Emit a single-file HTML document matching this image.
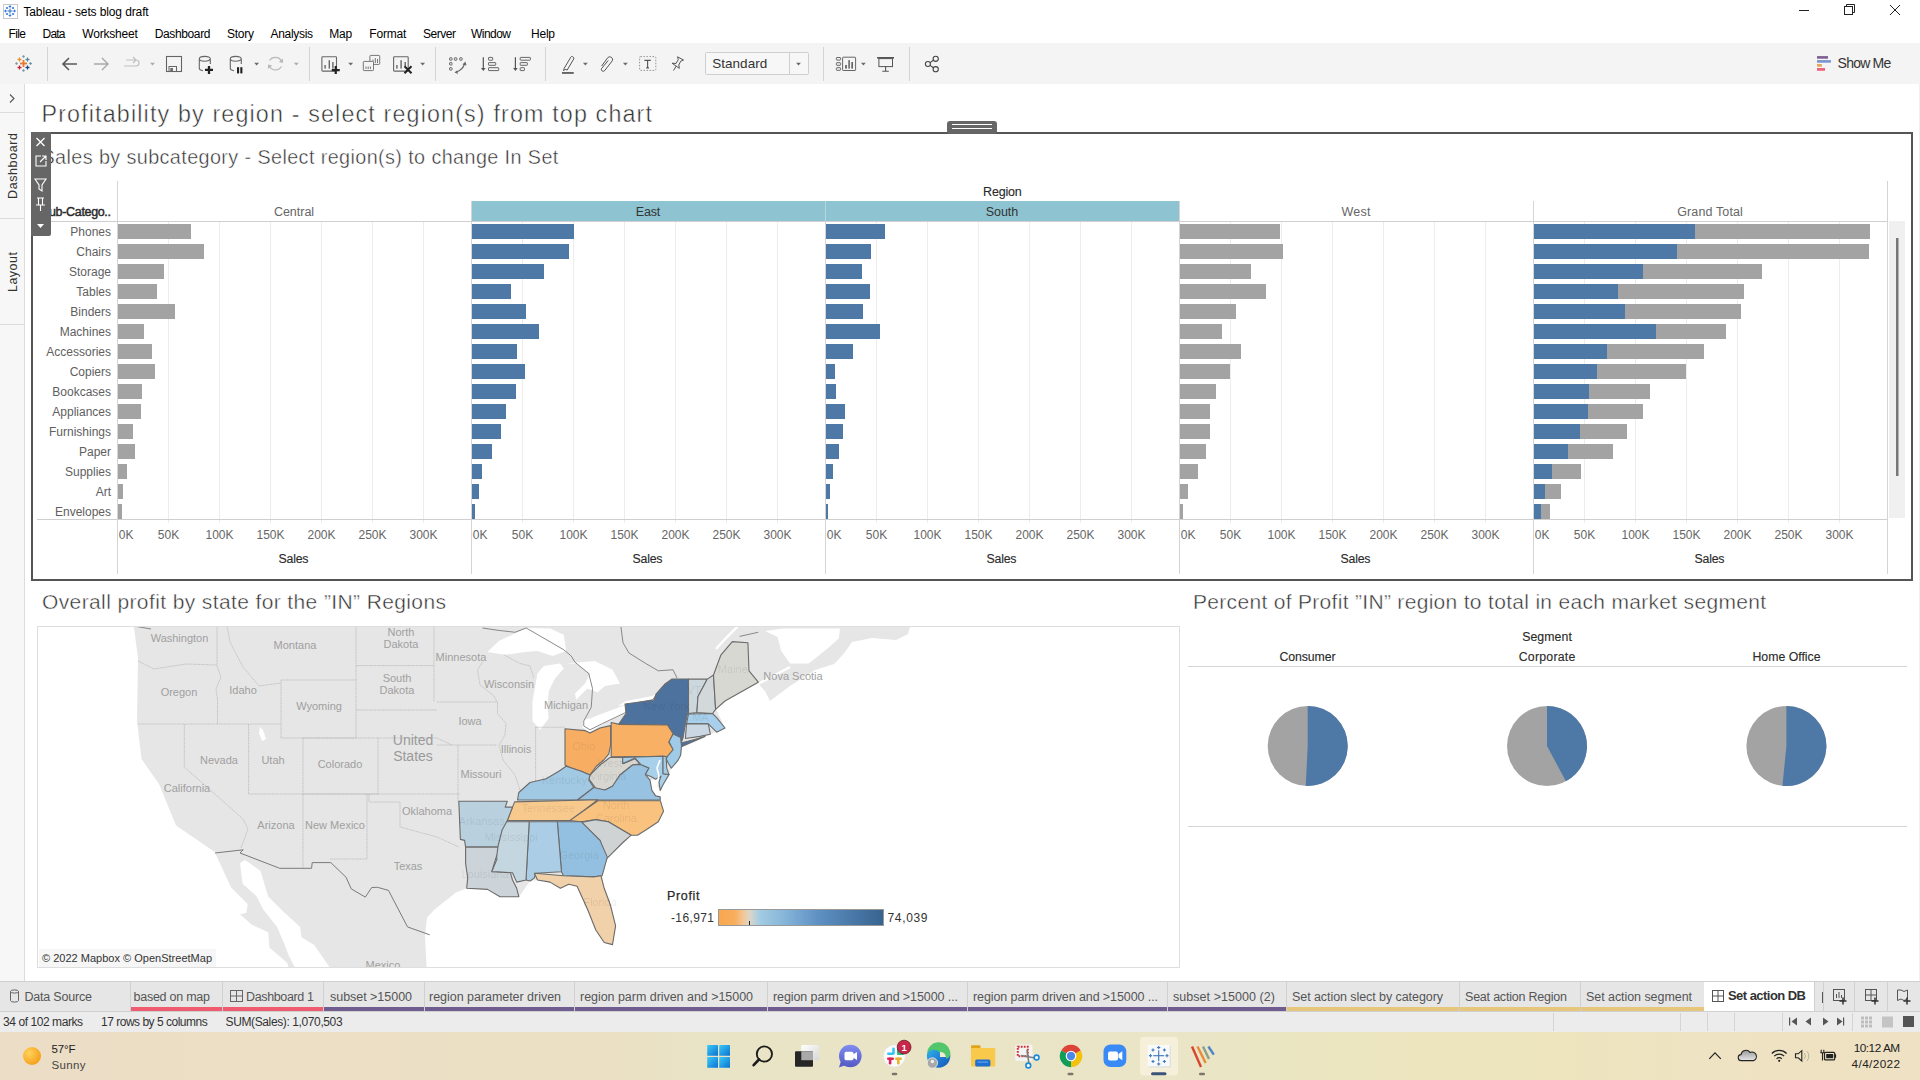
<!DOCTYPE html>
<html><head><meta charset="utf-8"><title>Tableau - sets blog draft</title>
<style>
html,body{margin:0;padding:0;width:1920px;height:1080px;overflow:hidden;background:#fff;}
svg{display:block;font-family:"Liberation Sans", sans-serif;}
</style></head><body>
<svg width="1920" height="1080" viewBox="0 0 1920 1080">
<rect x="0" y="0" width="1920" height="1080" fill="#ffffff" />
<rect x="0" y="43" width="1920" height="41" fill="#f4f4f4" />
<rect x="1919" y="84" width="1" height="897" fill="#f0f0f0" />
<rect x="0" y="84" width="24" height="897" fill="#f7f7f7" />
<line x1="24.5" y1="84" x2="24.5" y2="981" stroke="#dcdcdc" stroke-width="1" />
<line x1="0" y1="112.5" x2="24" y2="112.5" stroke="#dcdcdc" stroke-width="1" />
<line x1="0" y1="218.5" x2="24" y2="218.5" stroke="#dcdcdc" stroke-width="1" />
<line x1="0" y1="324.5" x2="24" y2="324.5" stroke="#dcdcdc" stroke-width="1" />
<rect x="0" y="981" width="1920" height="31" fill="#e6e6e6" />
<line x1="0" y1="981.5" x2="1920" y2="981.5" stroke="#d0d0d0" stroke-width="1" />
<line x1="0" y1="1011.5" x2="1920" y2="1011.5" stroke="#d0d0d0" stroke-width="1" />
<rect x="0" y="1012" width="1920" height="20" fill="#ececec" />
<defs><linearGradient id="tb" x1="0" y1="0" x2="1" y2="0"><stop offset="0" stop-color="#ecdec6"/><stop offset="0.3" stop-color="#ebdfc4"/><stop offset="0.38" stop-color="#e9e4c6"/><stop offset="0.62" stop-color="#e9e5c6"/><stop offset="0.7" stop-color="#ece6c0"/><stop offset="0.8" stop-color="#ede5bd"/><stop offset="0.88" stop-color="#eee3c2"/><stop offset="1" stop-color="#efe1c3"/></linearGradient></defs>
<rect x="0" y="1032" width="1920" height="48" fill="url(#tb)" />
<rect x="3.5" y="4.5" width="14" height="14" fill="#ffffff" stroke="#c8c8c8" stroke-width="1"/>
<line x1="7.5" y1="11" x2="12.5" y2="11" stroke="#3a7bd5" stroke-width="1.1" />
<line x1="10" y1="8.5" x2="10" y2="13.5" stroke="#3a7bd5" stroke-width="1.1" />
<line x1="8.7" y1="6.5" x2="11.3" y2="6.5" stroke="#3a7bd5" stroke-width="1.1" />
<line x1="10" y1="5.2" x2="10" y2="7.8" stroke="#3a7bd5" stroke-width="1.1" />
<line x1="8.7" y1="15.5" x2="11.3" y2="15.5" stroke="#3a7bd5" stroke-width="1.1" />
<line x1="10" y1="14.2" x2="10" y2="16.8" stroke="#3a7bd5" stroke-width="1.1" />
<line x1="4.2" y1="11" x2="6.8" y2="11" stroke="#3a7bd5" stroke-width="1.1" />
<line x1="5.5" y1="9.7" x2="5.5" y2="12.3" stroke="#3a7bd5" stroke-width="1.1" />
<line x1="13.2" y1="11" x2="15.8" y2="11" stroke="#3a7bd5" stroke-width="1.1" />
<line x1="14.5" y1="9.7" x2="14.5" y2="12.3" stroke="#3a7bd5" stroke-width="1.1" />
<line x1="5.9" y1="8" x2="8.1" y2="8" stroke="#3a7bd5" stroke-width="1.1" />
<line x1="7" y1="6.9" x2="7" y2="9.1" stroke="#3a7bd5" stroke-width="1.1" />
<line x1="11.9" y1="8" x2="14.1" y2="8" stroke="#3a7bd5" stroke-width="1.1" />
<line x1="13" y1="6.9" x2="13" y2="9.1" stroke="#3a7bd5" stroke-width="1.1" />
<line x1="5.9" y1="14" x2="8.1" y2="14" stroke="#3a7bd5" stroke-width="1.1" />
<line x1="7" y1="12.9" x2="7" y2="15.1" stroke="#3a7bd5" stroke-width="1.1" />
<line x1="11.9" y1="14" x2="14.1" y2="14" stroke="#3a7bd5" stroke-width="1.1" />
<line x1="13" y1="12.9" x2="13" y2="15.1" stroke="#3a7bd5" stroke-width="1.1" />
<text x="23.4" y="15.6" font-size="12" fill="#000" textLength="125.3" lengthAdjust="spacing">Tableau - sets blog draft</text>
<line x1="1799" y1="10.5" x2="1809" y2="10.5" stroke="#222" stroke-width="1" />
<rect x="1844.5" y="6.5" width="8" height="8" fill="none" stroke="#222" stroke-width="1"/>
<path d="M1846.5,6.5 V4.5 H1854.5 V12.5 H1852.5" fill="none" stroke="#222" stroke-width="1" />
<line x1="1890" y1="5" x2="1900" y2="15" stroke="#222" stroke-width="1" />
<line x1="1900" y1="5" x2="1890" y2="15" stroke="#222" stroke-width="1" />
<text x="8.5" y="37.5" font-size="12" fill="#000" textLength="17.5" lengthAdjust="spacing">File</text>
<text x="42.5" y="37.5" font-size="12" fill="#000" textLength="23" lengthAdjust="spacing">Data</text>
<text x="82.3" y="37.5" font-size="12" fill="#000" textLength="55.5" lengthAdjust="spacing">Worksheet</text>
<text x="154.7" y="37.5" font-size="12" fill="#000" textLength="55.8" lengthAdjust="spacing">Dashboard</text>
<text x="226.9" y="37.5" font-size="12" fill="#000" textLength="27" lengthAdjust="spacing">Story</text>
<text x="270.5" y="37.5" font-size="12" fill="#000" textLength="42.5" lengthAdjust="spacing">Analysis</text>
<text x="329.3" y="37.5" font-size="12" fill="#000" textLength="23" lengthAdjust="spacing">Map</text>
<text x="369.3" y="37.5" font-size="12" fill="#000" textLength="37" lengthAdjust="spacing">Format</text>
<text x="423" y="37.5" font-size="12" fill="#000" textLength="33" lengthAdjust="spacing">Server</text>
<text x="471" y="37.5" font-size="12" fill="#000" textLength="40" lengthAdjust="spacing">Window</text>
<text x="531" y="37.5" font-size="12" fill="#000" textLength="24" lengthAdjust="spacing">Help</text>
<line x1="47.5" y1="47" x2="47.5" y2="81" stroke="#d4d4d4" stroke-width="1" />
<line x1="309.5" y1="47" x2="309.5" y2="81" stroke="#d4d4d4" stroke-width="1" />
<line x1="435.5" y1="47" x2="435.5" y2="81" stroke="#d4d4d4" stroke-width="1" />
<line x1="545.5" y1="47" x2="545.5" y2="81" stroke="#d4d4d4" stroke-width="1" />
<line x1="823.5" y1="47" x2="823.5" y2="81" stroke="#d4d4d4" stroke-width="1" />
<line x1="909.5" y1="47" x2="909.5" y2="81" stroke="#d4d4d4" stroke-width="1" />
<line x1="20.0" y1="63.5" x2="27.0" y2="63.5" stroke="#e8762c" stroke-width="1.8" />
<line x1="23.5" y1="60.0" x2="23.5" y2="67.0" stroke="#e8762c" stroke-width="1.8" />
<line x1="17.5" y1="59.5" x2="21.5" y2="59.5" stroke="#eb9129" stroke-width="1.3" />
<line x1="19.5" y1="57.5" x2="19.5" y2="61.5" stroke="#eb9129" stroke-width="1.3" />
<line x1="25.5" y1="59.5" x2="29.5" y2="59.5" stroke="#5b879b" stroke-width="1.3" />
<line x1="27.5" y1="57.5" x2="27.5" y2="61.5" stroke="#5b879b" stroke-width="1.3" />
<line x1="17.5" y1="67.5" x2="21.5" y2="67.5" stroke="#c72035" stroke-width="1.3" />
<line x1="19.5" y1="65.5" x2="19.5" y2="69.5" stroke="#c72035" stroke-width="1.3" />
<line x1="25.5" y1="67.5" x2="29.5" y2="67.5" stroke="#1f457e" stroke-width="1.3" />
<line x1="27.5" y1="65.5" x2="27.5" y2="69.5" stroke="#1f457e" stroke-width="1.3" />
<line x1="22.3" y1="56.5" x2="24.7" y2="56.5" stroke="#7099a6" stroke-width="1.2" />
<line x1="23.5" y1="55.3" x2="23.5" y2="57.7" stroke="#7099a6" stroke-width="1.2" />
<line x1="22.3" y1="70.5" x2="24.7" y2="70.5" stroke="#7099a6" stroke-width="1.2" />
<line x1="23.5" y1="69.3" x2="23.5" y2="71.7" stroke="#7099a6" stroke-width="1.2" />
<line x1="15.3" y1="63.5" x2="17.7" y2="63.5" stroke="#7099a6" stroke-width="1.2" />
<line x1="16.5" y1="62.3" x2="16.5" y2="64.7" stroke="#7099a6" stroke-width="1.2" />
<line x1="29.3" y1="63.5" x2="31.7" y2="63.5" stroke="#59879b" stroke-width="1.2" />
<line x1="30.5" y1="62.3" x2="30.5" y2="64.7" stroke="#59879b" stroke-width="1.2" />
<path d="M63,64 H77 M69,58 L63,64 L69,70" fill="none" stroke="#5a5a5a" stroke-width="1.6" />
<path d="M94,64 H108 M102,58 L108,64 L102,70" fill="none" stroke="#a8a8a8" stroke-width="1.4" />
<path d="M124,66 H136 a3,3 0 0 0 0,-6 H126 M133,57 L136,60 L133,63" fill="none" stroke="#c0c0c0" stroke-width="1.2" />
<polygon points="150.1,62.7 154.9,62.7 152.5,65.4" fill="#aaa" stroke="none" stroke-width="1" />
<rect x="166.5" y="56.5" width="15" height="15" fill="none" stroke="#666" stroke-width="1.1"/>
<rect x="169" y="66.5" width="7.5" height="5" fill="none" stroke="#666" stroke-width="1"/>
<rect x="170.3" y="68" width="2.6" height="3.3" fill="#666" />
<path d="M199.3,58.8 A5.5,2.4 0 0 1 210.3,58.8 A5.5,2.4 0 0 1 199.3,58.8 V68.5 A5.5,2.4 0 0 0 203,70.7 M210.3,58.8 V64" fill="none" stroke="#666" stroke-width="1.1" />
<path d="M205,69.9 H213 M209,65.9 V73.9" fill="none" stroke="#222" stroke-width="2.3" />
<path d="M230.3,58.8 A5.5,2.4 0 0 1 241.3,58.8 A5.5,2.4 0 0 1 230.3,58.8 V68.5 A5.5,2.4 0 0 0 234,70.7 M241.3,58.8 V64" fill="none" stroke="#666" stroke-width="1.1" />
<rect x="237" y="67.2" width="2.1" height="6.2" fill="#222" />
<rect x="240.3" y="67.2" width="2.1" height="6.2" fill="#222" />
<polygon points="254.2,62.7 259.0,62.7 256.6,65.4" fill="#6a6a6a" stroke="none" stroke-width="1" />
<path d="M269.5,60.5 A7,7 0 0 1 281.5,61 M281.5,66.5 A7,7 0 0 1 269.5,66.5" fill="none" stroke="#b8b8b8" stroke-width="1.2" />
<polygon points="283.0,58.5 283.0,63.0 278.8,62.0" fill="#b8b8b8" stroke="none" stroke-width="1" />
<polygon points="268.0,69.0 268.0,64.5 272.2,65.5" fill="#b8b8b8" stroke="none" stroke-width="1" />
<polygon points="293.9,62.7 298.7,62.7 296.3,65.4" fill="#aaa" stroke="none" stroke-width="1" />
<rect x="321.9" y="56.7" width="14.6" height="14.4" fill="none" stroke="#666" stroke-width="1.1" rx="0.8"/>
<rect x="324.4" y="65" width="1.4" height="3.6" fill="#666" />
<rect x="328.6" y="60.2" width="1.4" height="8.4" fill="#666" />
<rect x="332.2" y="62" width="1.4" height="6.6" fill="#666" />
<path d="M331.75,70.1 H339.75 M335.75,66.1 V74.1" fill="none" stroke="#222" stroke-width="2.2" />
<polygon points="348.3,62.7 353.1,62.7 350.7,65.4" fill="#6a6a6a" stroke="none" stroke-width="1" />
<rect x="369.9" y="55.4" width="9.8" height="9" fill="#f4f4f4" stroke="#777" stroke-width="1" rx="0.8"/>
<rect x="372.5" y="59.5" width="1" height="3.5" fill="#777" />
<rect x="374.8" y="58" width="1" height="5" fill="#777" />
<rect x="377" y="59" width="1" height="4" fill="#777" />
<rect x="363.3" y="61.4" width="10.2" height="9.2" fill="#f4f4f4" stroke="#777" stroke-width="1" rx="0.8"/>
<rect x="365.5" y="66.5" width="1" height="2.5" fill="#777" />
<rect x="367.7" y="66.5" width="1" height="2.5" fill="#777" />
<rect x="369.9" y="66.5" width="1" height="2.5" fill="#777" />
<rect x="393.6" y="56.7" width="14.6" height="14.4" fill="none" stroke="#666" stroke-width="1.1" rx="0.8"/>
<rect x="396.2" y="65" width="1.4" height="3.6" fill="#666" />
<rect x="400.4" y="60.2" width="1.4" height="8.4" fill="#666" />
<rect x="404.5" y="62" width="1.4" height="4" fill="#666" />
<path d="M404.5,66.3 L411.5,73.3 M411.5,66.3 L404.5,73.3" fill="none" stroke="#222" stroke-width="2" />
<polygon points="420.2,62.7 425.0,62.7 422.6,65.4" fill="#6a6a6a" stroke="none" stroke-width="1" />
<g stroke="#666" stroke-width="1" fill="none">
<rect x="449.6" y="57.8" width="2.4" height="2.4" rx="0.4"/>
<rect x="454.4" y="57.8" width="2.4" height="2.4" rx="0.4"/>
<rect x="459.7" y="57.8" width="2.4" height="2.4" rx="0.4"/>
<rect x="449.6" y="62.6" width="2.4" height="2.4" rx="0.4"/>
<rect x="449.6" y="67.7" width="2.4" height="2.4" rx="0.4"/>
</g>
<path d="M456,72 Q463,70 464.6,63.5" fill="none" stroke="#666" stroke-width="1.1" />
<polygon points="462.5,64.5 465.4,61.5 466.5,65.5" fill="#666" stroke="none" stroke-width="1" />
<polygon points="457.0,70.5 454.5,72.5 458.0,74.0" fill="#666" stroke="none" stroke-width="1" />
<path d="M483.3,57.2 V69" fill="none" stroke="#555" stroke-width="1.2" />
<polygon points="481.0,68.0 485.6,68.0 483.3,71.0" fill="#555" stroke="none" stroke-width="1" />
<g fill="none" stroke="#666" stroke-width="1">
<rect x="488.5" y="57.4" width="4.2" height="2.8" rx="0.5"/><rect x="488.5" y="62.6" width="7.2" height="2.7" rx="0.5"/><rect x="488.5" y="67.7" width="10.2" height="2.9" rx="0.5"/>
<rect x="520.2" y="57.4" width="10.2" height="2.8" rx="0.5"/><rect x="520.2" y="62.6" width="7.2" height="2.7" rx="0.5"/><rect x="520.2" y="67.7" width="4.2" height="2.9" rx="0.5"/>
</g>
<path d="M515.4,57.2 V69" fill="none" stroke="#555" stroke-width="1.2" />
<polygon points="513.1,68.0 517.7,68.0 515.4,71.0" fill="#555" stroke="none" stroke-width="1" />
<path d="M565.2,69.4 L563.5,70.6 L564.2,68.3 L570.8,57.2 a1.3,1.3 0 0 1 1.9,-0.5 L573.3,57.2 a1.3,1.3 0 0 1 0.4,1.8 L567.2,70 Z" fill="none" stroke="#555" stroke-width="1.0" />
<rect x="562" y="72.1" width="11.75" height="1.7" fill="#555" />
<polygon points="583.0,62.7 587.8,62.7 585.4,65.4" fill="#6a6a6a" stroke="none" stroke-width="1" />
<path d="M601.6,66 L607.8,57.6 a2.8,2.8 0 0 1 4.5,3.2 L604.5,70.8 a1.9,1.9 0 0 1 -3,-2.2 L608.2,60.5" fill="none" stroke="#555" stroke-width="1.0" />
<polygon points="623.0,62.7 627.8,62.7 625.4,65.4" fill="#6a6a6a" stroke="none" stroke-width="1" />
<rect x="639.6" y="56.6" width="16.2" height="13.8" fill="none" stroke="#999" stroke-width="1" stroke-dasharray="1.6,1.4" rx="0.8"/>
<path d="M644.4,60.4 H650.8 M647.6,60.4 V67.9 M646.2,67.9 H649" fill="none" stroke="#555" stroke-width="1.1" />
<path d="M673.5,70.5 L676.3,66 M672,63.2 L676,63.5 L678.3,59.5 L677.5,56.8 L683.5,60 L680.7,61.2 L678.8,65 L679.3,68.3 Z" fill="none" stroke="#555" stroke-width="1.0" />
<rect x="705.5" y="52.5" width="103" height="22" fill="#f7f7f7" stroke="#cfcfcf" stroke-width="1" rx="1"/>
<line x1="789.5" y1="53" x2="789.5" y2="74" stroke="#cfcfcf" stroke-width="1" />
<text x="712.2" y="68" font-size="13.5" fill="#333" textLength="55" lengthAdjust="spacing">Standard</text>
<polygon points="796.1,62.7 800.9,62.7 798.5,65.4" fill="#666" stroke="none" stroke-width="1" />
<g fill="none" stroke="#666" stroke-width="1">
<rect x="836.4" y="57.5" width="4.2" height="2.6" rx="0.6"/>
<rect x="836.4" y="62.7" width="4.2" height="2.6" rx="0.6"/>
<rect x="836.4" y="67.7" width="4.2" height="2.6" rx="0.6"/>
<rect x="842.6" y="57.2" width="13" height="13.3" rx="0.6"/>
</g>
<rect x="845.2" y="65" width="1.6" height="3.6" fill="#555" />
<rect x="848.4" y="60.1" width="1.4" height="8.5" fill="#555" />
<rect x="851.4" y="62" width="1.5" height="6.6" fill="#555" />
<polygon points="861.0,62.7 865.8,62.7 863.4,65.4" fill="#6a6a6a" stroke="none" stroke-width="1" />
<rect x="877.1" y="57" width="16.9" height="1.6" fill="#555" />
<rect x="878.9" y="58.6" width="13.6" height="8" fill="none" stroke="#555" stroke-width="1"/>
<path d="M885.6,66.6 V71 M882.3,71.3 H888.8" fill="none" stroke="#555" stroke-width="1.1" />
<g fill="none" stroke="#444" stroke-width="1.1"><circle cx="927.9" cy="64" r="2.5"/><circle cx="935.7" cy="58.8" r="2.6"/><circle cx="935.7" cy="69.2" r="2.6"/></g>
<line x1="930.1" y1="62.6" x2="933.4" y2="60.3" stroke="#444" stroke-width="1.1" />
<line x1="930.1" y1="65.4" x2="933.4" y2="67.7" stroke="#444" stroke-width="1.1" />
<rect x="1817" y="56.1" width="11" height="2.6" fill="#7d5f93" />
<rect x="1817" y="60.1" width="13.9" height="2.6" fill="#7b93cf" />
<rect x="1817" y="64.1" width="4.9" height="2.6" fill="#e5a354" />
<rect x="1817" y="68" width="8" height="2.8" fill="#f0627a" />
<text x="1837.6" y="67.8" font-size="14" fill="#333" textLength="53.6" lengthAdjust="spacing">Show Me</text>
<path d="M10,94.5 L14,98.5 L10,102.5" fill="none" stroke="#555" stroke-width="1.1" />
<text x="16.5" y="166" font-size="12.5" fill="#333" text-anchor="middle" textLength="66" lengthAdjust="spacing" transform="rotate(-90 16.5 166)">Dashboard</text>
<text x="16.5" y="272" font-size="12.5" fill="#333" text-anchor="middle" textLength="40" lengthAdjust="spacing" transform="rotate(-90 16.5 272)">Layout</text>
<text x="41.5" y="121.5" font-size="23.3" fill="#2e2e2e" textLength="610.5" lengthAdjust="spacing" stroke="#fff" stroke-width="0.5">Profitability by region - select region(s) from top chart</text>
<text x="41.5" y="164" font-size="19.8" fill="#2e2e2e" textLength="516.8" lengthAdjust="spacing" stroke="#fff" stroke-width="0.45">Sales by subcategory - Select region(s) to change In Set</text>
<rect x="472" y="201" width="707" height="20" fill="#8ec3d2" />
<line x1="168.5" y1="221" x2="168.5" y2="523" stroke="#ececec" stroke-width="1" />
<line x1="219.5" y1="221" x2="219.5" y2="523" stroke="#ececec" stroke-width="1" />
<line x1="270.5" y1="221" x2="270.5" y2="523" stroke="#ececec" stroke-width="1" />
<line x1="321.5" y1="221" x2="321.5" y2="523" stroke="#ececec" stroke-width="1" />
<line x1="372.5" y1="221" x2="372.5" y2="523" stroke="#ececec" stroke-width="1" />
<line x1="423.5" y1="221" x2="423.5" y2="523" stroke="#ececec" stroke-width="1" />
<line x1="522.5" y1="221" x2="522.5" y2="523" stroke="#ececec" stroke-width="1" />
<line x1="573.5" y1="221" x2="573.5" y2="523" stroke="#ececec" stroke-width="1" />
<line x1="624.5" y1="221" x2="624.5" y2="523" stroke="#ececec" stroke-width="1" />
<line x1="675.5" y1="221" x2="675.5" y2="523" stroke="#ececec" stroke-width="1" />
<line x1="726.5" y1="221" x2="726.5" y2="523" stroke="#ececec" stroke-width="1" />
<line x1="777.5" y1="221" x2="777.5" y2="523" stroke="#ececec" stroke-width="1" />
<line x1="876.5" y1="221" x2="876.5" y2="523" stroke="#ececec" stroke-width="1" />
<line x1="927.5" y1="221" x2="927.5" y2="523" stroke="#ececec" stroke-width="1" />
<line x1="978.5" y1="221" x2="978.5" y2="523" stroke="#ececec" stroke-width="1" />
<line x1="1029.5" y1="221" x2="1029.5" y2="523" stroke="#ececec" stroke-width="1" />
<line x1="1080.5" y1="221" x2="1080.5" y2="523" stroke="#ececec" stroke-width="1" />
<line x1="1131.5" y1="221" x2="1131.5" y2="523" stroke="#ececec" stroke-width="1" />
<line x1="1230.5" y1="221" x2="1230.5" y2="523" stroke="#ececec" stroke-width="1" />
<line x1="1281.5" y1="221" x2="1281.5" y2="523" stroke="#ececec" stroke-width="1" />
<line x1="1332.5" y1="221" x2="1332.5" y2="523" stroke="#ececec" stroke-width="1" />
<line x1="1383.5" y1="221" x2="1383.5" y2="523" stroke="#ececec" stroke-width="1" />
<line x1="1434.5" y1="221" x2="1434.5" y2="523" stroke="#ececec" stroke-width="1" />
<line x1="1485.5" y1="221" x2="1485.5" y2="523" stroke="#ececec" stroke-width="1" />
<line x1="1584.5" y1="221" x2="1584.5" y2="523" stroke="#ececec" stroke-width="1" />
<line x1="1635.5" y1="221" x2="1635.5" y2="523" stroke="#ececec" stroke-width="1" />
<line x1="1686.5" y1="221" x2="1686.5" y2="523" stroke="#ececec" stroke-width="1" />
<line x1="1737.5" y1="221" x2="1737.5" y2="523" stroke="#ececec" stroke-width="1" />
<line x1="1788.5" y1="221" x2="1788.5" y2="523" stroke="#ececec" stroke-width="1" />
<line x1="1839.5" y1="221" x2="1839.5" y2="523" stroke="#ececec" stroke-width="1" />
<line x1="117.5" y1="181" x2="117.5" y2="574" stroke="#d4d4d4" stroke-width="1" />
<line x1="471.5" y1="201" x2="471.5" y2="574" stroke="#d4d4d4" stroke-width="1" />
<line x1="825.5" y1="201" x2="825.5" y2="574" stroke="#d4d4d4" stroke-width="1" />
<line x1="1179.5" y1="201" x2="1179.5" y2="574" stroke="#d4d4d4" stroke-width="1" />
<line x1="1533.5" y1="201" x2="1533.5" y2="574" stroke="#d4d4d4" stroke-width="1" />
<line x1="1887.5" y1="181" x2="1887.5" y2="574" stroke="#d4d4d4" stroke-width="1" />
<line x1="825.5" y1="201" x2="825.5" y2="221" stroke="#b9d6de" stroke-width="1" />
<line x1="37" y1="221.5" x2="1887" y2="221.5" stroke="#cfcfcf" stroke-width="1" />
<line x1="37" y1="519.5" x2="1887" y2="519.5" stroke="#cfcfcf" stroke-width="1" />
<text x="111" y="215.8" font-size="12.5" fill="#2a2a2a" text-anchor="end" textLength="70" lengthAdjust="spacing" stroke="#2a2a2a" stroke-width="0.45">Sub-Catego..</text>
<text x="111" y="235.8" font-size="12" fill="#606060" text-anchor="end">Phones</text>
<text x="111" y="255.8" font-size="12" fill="#606060" text-anchor="end">Chairs</text>
<text x="111" y="275.8" font-size="12" fill="#606060" text-anchor="end">Storage</text>
<text x="111" y="295.8" font-size="12" fill="#606060" text-anchor="end">Tables</text>
<text x="111" y="315.8" font-size="12" fill="#606060" text-anchor="end">Binders</text>
<text x="111" y="335.8" font-size="12" fill="#606060" text-anchor="end">Machines</text>
<text x="111" y="355.8" font-size="12" fill="#606060" text-anchor="end">Accessories</text>
<text x="111" y="375.8" font-size="12" fill="#606060" text-anchor="end">Copiers</text>
<text x="111" y="395.8" font-size="12" fill="#606060" text-anchor="end">Bookcases</text>
<text x="111" y="415.8" font-size="12" fill="#606060" text-anchor="end">Appliances</text>
<text x="111" y="435.8" font-size="12" fill="#606060" text-anchor="end">Furnishings</text>
<text x="111" y="455.8" font-size="12" fill="#606060" text-anchor="end">Paper</text>
<text x="111" y="475.8" font-size="12" fill="#606060" text-anchor="end">Supplies</text>
<text x="111" y="495.8" font-size="12" fill="#606060" text-anchor="end">Art</text>
<text x="111" y="515.8" font-size="12" fill="#606060" text-anchor="end">Envelopes</text>
<rect x="118" y="224" width="73" height="15" fill="#a3a3a3" />
<rect x="472" y="224" width="102" height="15" fill="#4e79a7" />
<rect x="826" y="224" width="59" height="15" fill="#4e79a7" />
<rect x="1180" y="224" width="100" height="15" fill="#a3a3a3" />
<rect x="1534" y="224" width="336" height="15" fill="#a3a3a3" />
<rect x="1534" y="224" width="161" height="15" fill="#4e79a7" />
<rect x="118" y="244" width="86" height="15" fill="#a3a3a3" />
<rect x="472" y="244" width="97" height="15" fill="#4e79a7" />
<rect x="826" y="244" width="45" height="15" fill="#4e79a7" />
<rect x="1180" y="244" width="103" height="15" fill="#a3a3a3" />
<rect x="1534" y="244" width="335" height="15" fill="#a3a3a3" />
<rect x="1534" y="244" width="143" height="15" fill="#4e79a7" />
<rect x="118" y="264" width="46" height="15" fill="#a3a3a3" />
<rect x="472" y="264" width="72" height="15" fill="#4e79a7" />
<rect x="826" y="264" width="36" height="15" fill="#4e79a7" />
<rect x="1180" y="264" width="71" height="15" fill="#a3a3a3" />
<rect x="1534" y="264" width="228" height="15" fill="#a3a3a3" />
<rect x="1534" y="264" width="109" height="15" fill="#4e79a7" />
<rect x="118" y="284" width="39" height="15" fill="#a3a3a3" />
<rect x="472" y="284" width="39" height="15" fill="#4e79a7" />
<rect x="826" y="284" width="44" height="15" fill="#4e79a7" />
<rect x="1180" y="284" width="86" height="15" fill="#a3a3a3" />
<rect x="1534" y="284" width="210" height="15" fill="#a3a3a3" />
<rect x="1534" y="284" width="84" height="15" fill="#4e79a7" />
<rect x="118" y="304" width="57" height="15" fill="#a3a3a3" />
<rect x="472" y="304" width="54" height="15" fill="#4e79a7" />
<rect x="826" y="304" width="37" height="15" fill="#4e79a7" />
<rect x="1180" y="304" width="56" height="15" fill="#a3a3a3" />
<rect x="1534" y="304" width="207" height="15" fill="#a3a3a3" />
<rect x="1534" y="304" width="91" height="15" fill="#4e79a7" />
<rect x="118" y="324" width="26" height="15" fill="#a3a3a3" />
<rect x="472" y="324" width="67" height="15" fill="#4e79a7" />
<rect x="826" y="324" width="54" height="15" fill="#4e79a7" />
<rect x="1180" y="324" width="42" height="15" fill="#a3a3a3" />
<rect x="1534" y="324" width="192" height="15" fill="#a3a3a3" />
<rect x="1534" y="324" width="122" height="15" fill="#4e79a7" />
<rect x="118" y="344" width="34" height="15" fill="#a3a3a3" />
<rect x="472" y="344" width="45" height="15" fill="#4e79a7" />
<rect x="826" y="344" width="27" height="15" fill="#4e79a7" />
<rect x="1180" y="344" width="61" height="15" fill="#a3a3a3" />
<rect x="1534" y="344" width="170" height="15" fill="#a3a3a3" />
<rect x="1534" y="344" width="73" height="15" fill="#4e79a7" />
<rect x="118" y="364" width="37" height="15" fill="#a3a3a3" />
<rect x="472" y="364" width="53" height="15" fill="#4e79a7" />
<rect x="826" y="364" width="9" height="15" fill="#4e79a7" />
<rect x="1180" y="364" width="50" height="15" fill="#a3a3a3" />
<rect x="1534" y="364" width="152" height="15" fill="#a3a3a3" />
<rect x="1534" y="364" width="63" height="15" fill="#4e79a7" />
<rect x="118" y="384" width="24" height="15" fill="#a3a3a3" />
<rect x="472" y="384" width="44" height="15" fill="#4e79a7" />
<rect x="826" y="384" width="10" height="15" fill="#4e79a7" />
<rect x="1180" y="384" width="36" height="15" fill="#a3a3a3" />
<rect x="1534" y="384" width="116" height="15" fill="#a3a3a3" />
<rect x="1534" y="384" width="55" height="15" fill="#4e79a7" />
<rect x="118" y="404" width="23" height="15" fill="#a3a3a3" />
<rect x="472" y="404" width="34" height="15" fill="#4e79a7" />
<rect x="826" y="404" width="19" height="15" fill="#4e79a7" />
<rect x="1180" y="404" width="30" height="15" fill="#a3a3a3" />
<rect x="1534" y="404" width="109" height="15" fill="#a3a3a3" />
<rect x="1534" y="404" width="54" height="15" fill="#4e79a7" />
<rect x="118" y="424" width="15" height="15" fill="#a3a3a3" />
<rect x="472" y="424" width="29" height="15" fill="#4e79a7" />
<rect x="826" y="424" width="17" height="15" fill="#4e79a7" />
<rect x="1180" y="424" width="30" height="15" fill="#a3a3a3" />
<rect x="1534" y="424" width="93" height="15" fill="#a3a3a3" />
<rect x="1534" y="424" width="46" height="15" fill="#4e79a7" />
<rect x="118" y="444" width="17" height="15" fill="#a3a3a3" />
<rect x="472" y="444" width="20" height="15" fill="#4e79a7" />
<rect x="826" y="444" width="13" height="15" fill="#4e79a7" />
<rect x="1180" y="444" width="26" height="15" fill="#a3a3a3" />
<rect x="1534" y="444" width="79" height="15" fill="#a3a3a3" />
<rect x="1534" y="444" width="34" height="15" fill="#4e79a7" />
<rect x="118" y="464" width="9" height="15" fill="#a3a3a3" />
<rect x="472" y="464" width="10" height="15" fill="#4e79a7" />
<rect x="826" y="464" width="7" height="15" fill="#4e79a7" />
<rect x="1180" y="464" width="18" height="15" fill="#a3a3a3" />
<rect x="1534" y="464" width="47" height="15" fill="#a3a3a3" />
<rect x="1534" y="464" width="18" height="15" fill="#4e79a7" />
<rect x="118" y="484" width="5" height="15" fill="#a3a3a3" />
<rect x="472" y="484" width="7" height="15" fill="#4e79a7" />
<rect x="826" y="484" width="4" height="15" fill="#4e79a7" />
<rect x="1180" y="484" width="8" height="15" fill="#a3a3a3" />
<rect x="1534" y="484" width="27" height="15" fill="#a3a3a3" />
<rect x="1534" y="484" width="11" height="15" fill="#4e79a7" />
<rect x="118" y="504" width="4" height="15" fill="#a3a3a3" />
<rect x="472" y="504" width="3" height="15" fill="#4e79a7" />
<rect x="826" y="504" width="2" height="15" fill="#4e79a7" />
<rect x="1180" y="504" width="3" height="15" fill="#a3a3a3" />
<rect x="1534" y="504" width="16" height="15" fill="#a3a3a3" />
<rect x="1534" y="504" width="7" height="15" fill="#4e79a7" />
<text x="1002.4" y="195.8" font-size="12.5" fill="#2a2a2a" text-anchor="middle" textLength="38.6" lengthAdjust="spacing" stroke="#2a2a2a" stroke-width="0.12">Region</text>
<text x="294" y="216" font-size="12.5" fill="#666" text-anchor="middle" textLength="40.2" lengthAdjust="spacing">Central</text>
<text x="648" y="216" font-size="12.5" fill="#333" text-anchor="middle" textLength="24.5" lengthAdjust="spacing">East</text>
<text x="1002" y="216" font-size="12.5" fill="#333" text-anchor="middle" textLength="32.4" lengthAdjust="spacing">South</text>
<text x="1356" y="216" font-size="12.5" fill="#666" text-anchor="middle" textLength="29" lengthAdjust="spacing">West</text>
<text x="1710" y="216" font-size="12.5" fill="#666" text-anchor="middle" textLength="65.7" lengthAdjust="spacing">Grand Total</text>
<text x="118.8" y="538.8" font-size="12" fill="#666">0K</text>
<text x="168.5" y="538.8" font-size="12" fill="#666" text-anchor="middle">50K</text>
<text x="219.5" y="538.8" font-size="12" fill="#666" text-anchor="middle">100K</text>
<text x="270.5" y="538.8" font-size="12" fill="#666" text-anchor="middle">150K</text>
<text x="321.5" y="538.8" font-size="12" fill="#666" text-anchor="middle">200K</text>
<text x="372.5" y="538.8" font-size="12" fill="#666" text-anchor="middle">250K</text>
<text x="423.5" y="538.8" font-size="12" fill="#666" text-anchor="middle">300K</text>
<text x="293.5" y="562.8" font-size="12.3" fill="#2a2a2a" text-anchor="middle" textLength="30" lengthAdjust="spacing" stroke="#2a2a2a" stroke-width="0.12">Sales</text>
<text x="472.8" y="538.8" font-size="12" fill="#666">0K</text>
<text x="522.5" y="538.8" font-size="12" fill="#666" text-anchor="middle">50K</text>
<text x="573.5" y="538.8" font-size="12" fill="#666" text-anchor="middle">100K</text>
<text x="624.5" y="538.8" font-size="12" fill="#666" text-anchor="middle">150K</text>
<text x="675.5" y="538.8" font-size="12" fill="#666" text-anchor="middle">200K</text>
<text x="726.5" y="538.8" font-size="12" fill="#666" text-anchor="middle">250K</text>
<text x="777.5" y="538.8" font-size="12" fill="#666" text-anchor="middle">300K</text>
<text x="647.5" y="562.8" font-size="12.3" fill="#2a2a2a" text-anchor="middle" textLength="30" lengthAdjust="spacing" stroke="#2a2a2a" stroke-width="0.12">Sales</text>
<text x="826.8" y="538.8" font-size="12" fill="#666">0K</text>
<text x="876.5" y="538.8" font-size="12" fill="#666" text-anchor="middle">50K</text>
<text x="927.5" y="538.8" font-size="12" fill="#666" text-anchor="middle">100K</text>
<text x="978.5" y="538.8" font-size="12" fill="#666" text-anchor="middle">150K</text>
<text x="1029.5" y="538.8" font-size="12" fill="#666" text-anchor="middle">200K</text>
<text x="1080.5" y="538.8" font-size="12" fill="#666" text-anchor="middle">250K</text>
<text x="1131.5" y="538.8" font-size="12" fill="#666" text-anchor="middle">300K</text>
<text x="1001.5" y="562.8" font-size="12.3" fill="#2a2a2a" text-anchor="middle" textLength="30" lengthAdjust="spacing" stroke="#2a2a2a" stroke-width="0.12">Sales</text>
<text x="1180.8" y="538.8" font-size="12" fill="#666">0K</text>
<text x="1230.5" y="538.8" font-size="12" fill="#666" text-anchor="middle">50K</text>
<text x="1281.5" y="538.8" font-size="12" fill="#666" text-anchor="middle">100K</text>
<text x="1332.5" y="538.8" font-size="12" fill="#666" text-anchor="middle">150K</text>
<text x="1383.5" y="538.8" font-size="12" fill="#666" text-anchor="middle">200K</text>
<text x="1434.5" y="538.8" font-size="12" fill="#666" text-anchor="middle">250K</text>
<text x="1485.5" y="538.8" font-size="12" fill="#666" text-anchor="middle">300K</text>
<text x="1355.5" y="562.8" font-size="12.3" fill="#2a2a2a" text-anchor="middle" textLength="30" lengthAdjust="spacing" stroke="#2a2a2a" stroke-width="0.12">Sales</text>
<text x="1534.8" y="538.8" font-size="12" fill="#666">0K</text>
<text x="1584.5" y="538.8" font-size="12" fill="#666" text-anchor="middle">50K</text>
<text x="1635.5" y="538.8" font-size="12" fill="#666" text-anchor="middle">100K</text>
<text x="1686.5" y="538.8" font-size="12" fill="#666" text-anchor="middle">150K</text>
<text x="1737.5" y="538.8" font-size="12" fill="#666" text-anchor="middle">200K</text>
<text x="1788.5" y="538.8" font-size="12" fill="#666" text-anchor="middle">250K</text>
<text x="1839.5" y="538.8" font-size="12" fill="#666" text-anchor="middle">300K</text>
<text x="1709.5" y="562.8" font-size="12.3" fill="#2a2a2a" text-anchor="middle" textLength="30" lengthAdjust="spacing" stroke="#2a2a2a" stroke-width="0.12">Sales</text>
<rect x="1889" y="221" width="16" height="297" fill="#f0f0f0" />
<rect x="1896" y="238" width="2.5" height="238" fill="#777" />
<rect x="32" y="133" width="1880" height="447" fill="none" stroke="#555" stroke-width="2"/>
<rect x="947" y="121" width="50" height="13" fill="#666" rx="3"/>
<line x1="952" y1="124.5" x2="992" y2="124.5" stroke="#fff" stroke-width="1" />
<line x1="952" y1="128.5" x2="992" y2="128.5" stroke="#fff" stroke-width="1" />
<path d="M31,132 H51 V234 a2,2 0 0 1 -2,2 H31 Z" fill="#666" stroke="none" stroke-width="1" />
<path d="M36.5,138 L44.5,146 M44.5,138 L36.5,146" fill="none" stroke="#fff" stroke-width="1.3" />
<path d="M41,156 H36 V166 H46 V161 M40,162 L46,156 M42,156 H46 V160" fill="none" stroke="#fff" stroke-width="1.1" />
<path d="M35,179 H46 L42,185 V191 L39,189 V185 Z" fill="none" stroke="#fff" stroke-width="1.1" />
<path d="M37,198 H44 M38.5,198 V205 M42.5,198 V205 M36,205 H45 M40.5,205 V211" fill="none" stroke="#fff" stroke-width="1.1" />
<polygon points="37.0,224.0 44.0,224.0 40.5,228.0" fill="#fff" stroke="none" stroke-width="1" />
<text x="42" y="609" font-size="21" fill="#2e2e2e" textLength="404" lengthAdjust="spacing" stroke="#fff" stroke-width="0.45">Overall profit by state for the ”IN” Regions</text>
<text x="1193" y="609" font-size="21" fill="#2e2e2e" textLength="573" lengthAdjust="spacing" stroke="#fff" stroke-width="0.45">Percent of Profit ”IN” region to total in each market segment</text>
<defs><clipPath id="mapclip"><rect x="38" y="627" width="1141" height="340"/></clipPath></defs>
<g clip-path="url(#mapclip)">
<rect x="38" y="627" width="1141" height="340" fill="#ffffff" />
<polygon points="133.0,620.0 912.0,620.0 908.0,634.0 896.0,640.0 872.0,638.0 852.0,642.0 845.0,652.0 838.0,660.0 834.0,664.0 815.0,670.0 790.0,686.0 770.0,701.0 765.0,691.0 762.0,688.0 758.0,683.0 740.0,693.0 725.0,701.0 716.0,709.0 725.0,728.0 711.0,734.0 705.0,736.4 682.0,746.0 681.5,755.2 677.8,760.7 671.3,768.1 669.0,774.6 663.0,784.8 660.2,790.4 660.2,799.6 664.0,811.0 658.0,822.0 646.0,830.0 631.0,835.0 612.0,853.0 606.0,859.0 602.0,876.0 604.0,888.0 610.0,905.0 616.0,926.0 612.0,945.0 604.0,942.0 596.0,930.0 587.0,909.0 577.0,886.0 569.0,884.0 560.0,888.0 550.0,882.0 537.0,880.0 530.0,881.0 519.0,897.0 500.0,897.0 487.0,889.0 467.0,888.0 456.0,892.5 435.0,909.0 427.0,917.5 425.0,936.0 427.0,975.0 291.0,975.0 287.3,962.9 269.4,947.6 268.2,932.2 251.6,924.6 240.0,914.3 246.4,913.0 247.7,904.1 231.1,887.5 222.2,868.3 214.5,851.7 176.0,825.5 159.0,784.0 141.5,759.0 137.0,721.0 138.0,658.0 133.0,620.0" fill="#e6e6e6" stroke="none" stroke-width="1" />
<polygon points="240.0,863.2 242.6,883.7 256.7,896.4 263.1,909.2 277.1,927.1 284.8,945.0 288.6,955.2 298.8,975.0 335.0,975.0 314.2,945.0 301.4,937.3 300.1,927.1 282.2,910.5 268.2,896.4 260.5,870.9 251.6,864.5 245.0,860.0" fill="#ffffff" stroke="none" stroke-width="1" />
<polygon points="765.0,631.0 783.8,628.5 840.0,628.5 838.8,638.5 827.5,648.5 815.0,658.5 808.8,663.5 790.0,663.5 781.2,651.0 777.5,637.0" fill="#ffffff" stroke="none" stroke-width="1" />
<path d="M758,684 L775,675 L790,667" fill="none" stroke="#ffffff" stroke-width="2.2" />
<polygon points="487.5,652.0 498.8,641.0 515.0,633.5 526.2,628.0 550.0,628.5 563.8,634.8 566.2,651.0 552.5,656.0 537.5,651.0 525.0,652.0 505.0,654.8" fill="#ffffff" stroke="none" stroke-width="1" />
<polygon points="532.5,721.0 532.5,701.0 537.5,673.5 543.8,666.0 560.0,663.5 563.8,668.5 555.0,678.5 548.8,691.0 547.5,706.0 548.8,718.5 540.0,729.8" fill="#ffffff" stroke="none" stroke-width="1" />
<polygon points="565.0,663.5 595.0,661.0 612.5,669.8 620.0,683.5 605.0,686.0 597.5,692.2 587.5,688.5 576.2,699.8 575.0,693.5 585.0,683.5 590.0,673.5 576.2,663.5" fill="#ffffff" stroke="none" stroke-width="1" />
<polygon points="583.8,719.8 582.5,727.2 588.8,732.2 606.2,722.2 627.5,712.2 626.0,704.8 602.5,713.5 590.0,718.5" fill="#ffffff" stroke="none" stroke-width="1" />
<polygon points="617.5,706.0 626.2,701.0 652.5,696.0 656.2,693.5 660.0,698.0 627.5,704.8" fill="#ffffff" stroke="none" stroke-width="1" />
<path d="M716,649 L726,638 L738,626" fill="none" stroke="#ffffff" stroke-width="2.5" />
<polygon points="260.0,727.0 263.0,730.0 266.0,739.0 262.0,741.0 259.0,733.0" fill="#ffffff" stroke="none" stroke-width="1" />
<path d="M138,661 L154,669 L186,664 L217,665" fill="none" stroke="#b9b9b9" stroke-width="0.7" stroke-dasharray="2,0.6"/>
<path d="M217,626 V666 L221,677 L216,689 L217.5,699 V724" fill="none" stroke="#b9b9b9" stroke-width="0.7" stroke-dasharray="2,0.6"/>
<path d="M138,724 H281" fill="none" stroke="#b9b9b9" stroke-width="0.7" stroke-dasharray="2,0.6"/>
<path d="M227,626 L230,642 L243,667 L259,686 L281,683" fill="none" stroke="#b9b9b9" stroke-width="0.7" stroke-dasharray="2,0.6"/>
<path d="M281,680 H356 V738 H281 Z" fill="none" stroke="#b9b9b9" stroke-width="0.7" stroke-dasharray="2,0.6"/>
<path d="M356,626 V680" fill="none" stroke="#b9b9b9" stroke-width="0.7" stroke-dasharray="2,0.6"/>
<path d="M356,665.6 H434" fill="none" stroke="#b9b9b9" stroke-width="0.7" stroke-dasharray="2,0.6"/>
<path d="M356,710 H437" fill="none" stroke="#b9b9b9" stroke-width="0.7" stroke-dasharray="2,0.6"/>
<path d="M378,738 L437,738 L452,745" fill="none" stroke="#b9b9b9" stroke-width="0.7" stroke-dasharray="2,0.6"/>
<path d="M303,738 H378 V794 H303 Z" fill="none" stroke="#b9b9b9" stroke-width="0.7" stroke-dasharray="2,0.6"/>
<path d="M248.6,724 V794" fill="none" stroke="#b9b9b9" stroke-width="0.7" stroke-dasharray="2,0.6"/>
<path d="M184.3,724 V767 L243,819 L248,829 L241,848" fill="none" stroke="#b9b9b9" stroke-width="0.7" stroke-dasharray="2,0.6"/>
<path d="M248.6,794 H378" fill="none" stroke="#b9b9b9" stroke-width="0.7" stroke-dasharray="2,0.6"/>
<path d="M303,794 V868" fill="none" stroke="#b9b9b9" stroke-width="0.7" stroke-dasharray="2,0.6"/>
<path d="M367,794 V859 H330" fill="none" stroke="#b9b9b9" stroke-width="0.7" stroke-dasharray="2,0.6"/>
<path d="M369,794 V802 H400 V827 L437,837 L459,847" fill="none" stroke="#b9b9b9" stroke-width="0.7" stroke-dasharray="2,0.6"/>
<path d="M378,794 H460" fill="none" stroke="#b9b9b9" stroke-width="0.7" stroke-dasharray="2,0.6"/>
<path d="M458,745 V802" fill="none" stroke="#b9b9b9" stroke-width="0.7" stroke-dasharray="2,0.6"/>
<path d="M434,626 V702" fill="none" stroke="#b9b9b9" stroke-width="0.7" stroke-dasharray="2,0.6"/>
<path d="M437,702 H497" fill="none" stroke="#b9b9b9" stroke-width="0.7" stroke-dasharray="2,0.6"/>
<path d="M437,745 H497" fill="none" stroke="#b9b9b9" stroke-width="0.7" stroke-dasharray="2,0.6"/>
<path d="M497.5,702 L497.5,713.5 L506,723.5 L505,735 L499,745 L503,760 L515,775 L520,790 L525,800" fill="none" stroke="#b9b9b9" stroke-width="0.7" stroke-dasharray="2,0.6"/>
<path d="M535.6,727 V790" fill="none" stroke="#b9b9b9" stroke-width="0.7" stroke-dasharray="2,0.6"/>
<path d="M460,802 H507" fill="none" stroke="#b9b9b9" stroke-width="0.7" stroke-dasharray="2,0.6"/>
<path d="M482.5,662 L477.5,670 L480,685 L494,696 L497,702" fill="none" stroke="#b9b9b9" stroke-width="0.7" stroke-dasharray="2,0.6"/>
<path d="M503.75,654.75 L520,663.5 L530,666 L534,678.5" fill="none" stroke="#b9b9b9" stroke-width="0.7" stroke-dasharray="2,0.6"/>
<path d="M535.6,727.25 H565" fill="none" stroke="#b9b9b9" stroke-width="0.7" stroke-dasharray="2,0.6"/>
<path d="M215.1,853 L243.2,849.8 L240,853 L279.7,868.3 L311.6,868.3 L312.2,862.6 L330.8,862.6 L346.1,877.3 L351.2,888.8 L365.3,897.1 L371.7,887.5 L377.5,887.3 L388.5,890.4 L407.5,926.9 L429.7,934.8" fill="none" stroke="#7a7a7a" stroke-width="1" />
<path d="M133.6,626 L151,629 M482.5,628 L498.75,630.4 L515,632.25 L526.25,628 L563.75,649.75 L571.25,656 L575,662.25 L588.75,673.5 L592.5,688.5 L591.25,707.25 L583.75,721 L583.75,726 L590,729.75 L602.5,723.5 L626.25,712.25 L627.5,704.75 L652.5,699.75 L657.5,693.5 L675,680 M620.8,626 L623,642.7 L629,653 L645.8,663.5 L658.3,670.8 L673,669.75 L677,678 M739.6,636.4 L758.3,632.25" fill="none" stroke="#7d7d7d" stroke-width="0.9" />
<polygon points="655.6,779.3 659.0,776.0 657.0,786.0 660.2,790.4 660.6,797.0 655.6,795.9 651.9,790.4 650.0,780.2" fill="#ffffff" stroke="none" stroke-width="1" />
<polygon points="682.0,745.0 703.0,737.0 708.0,735.0 686.0,741.0" fill="#ffffff" stroke="none" stroke-width="1" />
<polygon points="618.8,724.0 626.0,713.5 625.0,704.0 654.0,700.0 656.0,694.0 664.6,684.3 672.0,679.0 688.5,679.0 688.5,709.0 685.4,724.0 683.0,738.0 681.0,743.0 698.0,738.5 705.0,736.4 682.0,746.5 679.0,744.0 673.0,733.8 667.5,725.0" fill="#4e729e" stroke="#6b6b6b" stroke-width="1.1" stroke-linejoin="round"/>
<polygon points="565.0,728.8 585.0,730.6 590.0,733.0 600.0,728.0 610.6,725.6 610.6,745.0 608.8,753.8 603.8,760.0 596.2,766.2 590.0,775.0 581.2,771.2 570.0,767.5 565.0,765.0" fill="#f7ae63" stroke="#6b6b6b" stroke-width="1.1" stroke-linejoin="round"/>
<polygon points="611.2,722.5 619.4,724.4 667.5,725.0 673.1,733.8 668.8,742.5 673.8,750.0 672.5,756.2 611.2,756.9" fill="#f7b064" stroke="#6b6b6b" stroke-width="1.1" stroke-linejoin="round"/>
<polygon points="590.0,775.0 600.0,765.0 610.0,757.5 622.5,757.5 623.1,763.8 635.0,758.8 640.0,763.8 632.5,765.0 620.0,775.0 612.5,786.2 605.0,790.0 596.2,788.8 588.8,778.8" fill="#d7d6d0" stroke="#6b6b6b" stroke-width="1.1" stroke-linejoin="round"/>
<polygon points="517.5,800.0 518.8,792.5 530.0,782.5 546.2,778.8 558.8,771.2 566.2,766.2 581.2,771.2 590.0,775.0 588.8,780.0 593.8,787.5 577.5,800.0" fill="#a1c9e4" stroke="#6b6b6b" stroke-width="1.1" stroke-linejoin="round"/>
<polygon points="577.5,800.0 593.8,787.5 605.0,790.0 612.5,786.2 620.0,775.0 632.5,765.0 640.7,764.4 649.0,768.1 645.4,774.6 650.0,780.2 651.9,790.4 655.6,795.9 660.2,796.9 660.2,800.0" fill="#97c2e1" stroke="#6b6b6b" stroke-width="1.1" stroke-linejoin="round"/>
<polygon points="622.7,757.5 663.0,756.1 663.0,773.7 669.0,774.6 663.0,784.8 660.2,790.4 659.0,782.0 661.0,776.0 655.6,779.3 650.9,776.5 645.4,774.6 649.0,768.1 640.7,764.4 635.2,758.0 622.7,763.5" fill="#a8d0ea" stroke="#6b6b6b" stroke-width="1.1" stroke-linejoin="round"/>
<polygon points="663.0,756.1 666.2,756.5 666.7,768.1 669.0,774.6 663.0,773.7" fill="#a3cde8" stroke="#6b6b6b" stroke-width="1.1" stroke-linejoin="round"/>
<path d="M660,760 L657,768 L659,776 L656,786 L658,795" fill="none" stroke="#ffffff" stroke-width="1.6" />
<polygon points="673.1,733.9 680.6,737.6 681.5,745.9 680.6,755.2 677.8,760.7 671.3,768.1 668.5,763.5 666.2,758.9 668.0,755.6 673.1,749.6 669.0,741.8" fill="#9fcbe8" stroke="#6b6b6b" stroke-width="1.1" stroke-linejoin="round"/>
<polygon points="507.3,820.6 514.6,801.9 597.9,799.8 585.4,809.2 569.8,820.6" fill="#f8c98d" stroke="#6b6b6b" stroke-width="1.1" stroke-linejoin="round"/>
<polygon points="569.8,820.6 597.9,800.8 660.4,800.8 663.5,811.2 658.3,821.7 645.8,830.0 637.5,835.2 631.2,835.2 608.3,821.7 595.8,819.6 581.2,821.7" fill="#fac27f" stroke="#6b6b6b" stroke-width="1.1" stroke-linejoin="round"/>
<polygon points="581.2,822.5 595.8,819.6 608.3,821.7 631.2,835.2 622.9,842.5 612.5,852.9 606.2,859.2 600.0,840.4" fill="#d0d3d4" stroke="#6b6b6b" stroke-width="1.1" stroke-linejoin="round"/>
<polygon points="557.3,821.7 581.2,821.7 600.0,840.4 607.3,857.1 602.1,875.8 593.8,876.9 563.5,875.8 561.5,871.7" fill="#93c0e0" stroke="#6b6b6b" stroke-width="1.1" stroke-linejoin="round"/>
<polygon points="529.2,821.7 557.3,821.7 561.5,871.7 535.4,873.3 534.4,877.9 530.2,881.0 526.0,880.0" fill="#abcde5" stroke="#6b6b6b" stroke-width="1.1" stroke-linejoin="round"/>
<polygon points="505.2,821.7 529.2,821.7 526.0,880.0 516.7,882.1 512.5,872.7 491.7,871.7 496.9,859.2 495.8,846.7 500.0,830.0" fill="#c4d6e0" stroke="#6b6b6b" stroke-width="1.1" stroke-linejoin="round"/>
<polygon points="458.8,801.2 507.3,801.2 505.2,807.1 512.5,807.1 507.3,820.6 502.1,830.0 497.9,846.7 465.6,847.1 464.6,840.4 460.4,839.4" fill="#b9d0df" stroke="#6b6b6b" stroke-width="1.1" stroke-linejoin="round"/>
<polygon points="465.6,847.1 497.9,847.1 496.9,855.0 491.7,871.7 510.4,872.7 512.5,880.0 516.7,888.3 518.8,896.7 500.0,896.7 487.5,889.4 466.7,888.3 467.7,877.9 465.6,863.3" fill="#ccd4d9" stroke="#6b6b6b" stroke-width="1.1" stroke-linejoin="round"/>
<polygon points="534.4,873.3 563.5,875.8 593.8,876.9 601.0,875.8 604.2,888.3 610.4,905.0 615.6,925.8 612.5,944.6 604.2,942.5 595.8,930.0 587.5,909.2 577.1,886.2 568.8,884.2 560.4,888.3 550.0,882.1 537.5,880.0" fill="#f0d1a9" stroke="#6b6b6b" stroke-width="1.1" stroke-linejoin="round"/>
<polygon points="688.5,679.1 707.3,679.1 697.9,696.8 696.9,712.5 688.5,713.5" fill="#cdd8de" stroke="#6b6b6b" stroke-width="1.1" stroke-linejoin="round"/>
<polygon points="707.3,679.1 713.5,675.0 715.6,709.3 712.5,713.5 696.9,712.5 697.9,696.8" fill="#d3d8da" stroke="#6b6b6b" stroke-width="1.1" stroke-linejoin="round"/>
<polygon points="713.5,675.0 720.8,655.2 732.3,641.6 747.9,642.7 749.0,670.8 758.3,682.2 739.6,692.7 725.0,701.0 715.6,709.3" fill="#d8d8d2" stroke="#6b6b6b" stroke-width="1.1" stroke-linejoin="round"/>
<polygon points="688.5,714.0 712.5,713.5 716.7,717.7 725.0,728.0 716.7,732.2 708.3,723.9 686.5,723.9" fill="#a8d0ec" stroke="#6b6b6b" stroke-width="1.1" stroke-linejoin="round"/>
<polygon points="686.5,723.9 708.3,723.9 710.4,734.3 700.0,736.4 685.4,738.5" fill="#c9d8e2" stroke="#6b6b6b" stroke-width="1.1" stroke-linejoin="round"/>
<text x="179.5" y="641.7" font-size="11" fill="#a0a0a0" text-anchor="middle">Washington</text>
<text x="295" y="649" font-size="11" fill="#a0a0a0" text-anchor="middle">Montana</text>
<text x="401" y="636" font-size="11" fill="#a0a0a0" text-anchor="middle">North</text>
<text x="401" y="648" font-size="11" fill="#a0a0a0" text-anchor="middle">Dakota</text>
<text x="461" y="661" font-size="11" fill="#a0a0a0" text-anchor="middle">Minnesota</text>
<text x="397" y="682" font-size="11" fill="#a0a0a0" text-anchor="middle">South</text>
<text x="397" y="694" font-size="11" fill="#a0a0a0" text-anchor="middle">Dakota</text>
<text x="509" y="688" font-size="11" fill="#a0a0a0" text-anchor="middle">Wisconsin</text>
<text x="566" y="709" font-size="11" fill="#a0a0a0" text-anchor="middle">Michigan</text>
<text x="179" y="696" font-size="11" fill="#a0a0a0" text-anchor="middle">Oregon</text>
<text x="243" y="694" font-size="11" fill="#a0a0a0" text-anchor="middle">Idaho</text>
<text x="319" y="710" font-size="11" fill="#a0a0a0" text-anchor="middle">Wyoming</text>
<text x="470" y="725" font-size="11" fill="#a0a0a0" text-anchor="middle">Iowa</text>
<text x="516" y="753" font-size="11" fill="#a0a0a0" text-anchor="middle">Illinois</text>
<text x="219" y="764" font-size="11" fill="#a0a0a0" text-anchor="middle">Nevada</text>
<text x="273" y="764" font-size="11" fill="#a0a0a0" text-anchor="middle">Utah</text>
<text x="340" y="768" font-size="11" fill="#a0a0a0" text-anchor="middle">Colorado</text>
<text x="481" y="778" font-size="11" fill="#a0a0a0" text-anchor="middle">Missouri</text>
<text x="187" y="792" font-size="11" fill="#a0a0a0" text-anchor="middle">California</text>
<text x="427" y="815" font-size="11" fill="#a0a0a0" text-anchor="middle">Oklahoma</text>
<text x="276" y="829" font-size="11" fill="#a0a0a0" text-anchor="middle">Arizona</text>
<text x="335" y="829" font-size="11" fill="#a0a0a0" text-anchor="middle">New Mexico</text>
<text x="408" y="870" font-size="11" fill="#a0a0a0" text-anchor="middle">Texas</text>
<text x="793" y="680" font-size="11" fill="#a0a0a0" text-anchor="middle">Nova Scotia</text>
<text x="383" y="968.5" font-size="11" fill="#a0a0a0" text-anchor="middle">Mexico</text>
<text x="413" y="745" font-size="14" fill="#9a9a9a" text-anchor="middle">United</text>
<text x="413" y="761" font-size="14" fill="#9a9a9a" text-anchor="middle">States</text>
<text x="666.4" y="709.8" font-size="11" fill="#000" text-anchor="middle" fill-opacity="0.09">New York</text>
<text x="583.8" y="750.3" font-size="11" fill="#000" text-anchor="middle" fill-opacity="0.09">Ohio</text>
<text x="609.8" y="766.5" font-size="11" fill="#000" text-anchor="middle" fill-opacity="0.09">West</text>
<text x="608" y="779.5" font-size="11" fill="#000" text-anchor="middle" fill-opacity="0.09">Virginia</text>
<text x="564.4" y="784.3" font-size="11" fill="#000" text-anchor="middle" fill-opacity="0.09">Kentucky</text>
<text x="548.2" y="811.9" font-size="11" fill="#000" text-anchor="middle" fill-opacity="0.09">Tennessee</text>
<text x="616.2" y="809.3" font-size="11" fill="#000" text-anchor="middle" fill-opacity="0.09">North</text>
<text x="616.2" y="821.6" font-size="11" fill="#000" text-anchor="middle" fill-opacity="0.09">Carolina</text>
<text x="481.8" y="824.8" font-size="11" fill="#000" text-anchor="middle" fill-opacity="0.09">Arkansas</text>
<text x="511" y="841" font-size="11" fill="#000" text-anchor="middle" fill-opacity="0.09">Mississippi</text>
<text x="579" y="858.8" font-size="11" fill="#000" text-anchor="middle" fill-opacity="0.09">Georgia</text>
<text x="485" y="878.2" font-size="11" fill="#000" text-anchor="middle" fill-opacity="0.09">Louisiana</text>
<text x="600" y="905.8" font-size="11" fill="#000" text-anchor="middle" fill-opacity="0.09">Florida</text>
<text x="732.8" y="672.6" font-size="11" fill="#000" text-anchor="middle" fill-opacity="0.09">Maine</text>
<text x="694" y="693.6" font-size="11" fill="#000" text-anchor="middle" fill-opacity="0.09">VT</text>
<text x="700.4" y="720.5" font-size="11" fill="#000" text-anchor="middle" fill-opacity="0.09">MA</text>
</g>
<rect x="37.5" y="626.5" width="1142" height="341" fill="none" stroke="#dedede" stroke-width="1"/>
<rect x="39" y="949" width="177" height="18" fill="#f4f4f4" opacity="0.85"/>
<text x="42" y="962" font-size="11" fill="#333" textLength="170" lengthAdjust="spacing">© 2022 Mapbox © OpenStreetMap</text>
<text x="667" y="899.5" font-size="12.5" fill="#2a2a2a" textLength="32.5" lengthAdjust="spacing" stroke="#2a2a2a" stroke-width="0.25">Profit</text>
<defs><linearGradient id="lg" x1="0" x2="1"><stop offset="0" stop-color="#f9a64e"/><stop offset="0.1" stop-color="#f8ae5e"/><stop offset="0.15" stop-color="#f3c796"/><stop offset="0.19" stop-color="#dbd6c9"/><stop offset="0.25" stop-color="#a3cce3"/><stop offset="0.4" stop-color="#86b5d9"/><stop offset="0.6" stop-color="#5f91c4"/><stop offset="1" stop-color="#37638f"/></linearGradient></defs>
<rect x="718.5" y="909.5" width="165" height="16" fill="url(#lg)" stroke="#999" stroke-width="1"/>
<line x1="749.5" y1="921" x2="749.5" y2="925" stroke="#222" stroke-width="1" />
<text x="671" y="922.3" font-size="12" fill="#333" textLength="43" lengthAdjust="spacing">-16,971</text>
<text x="887.5" y="922.3" font-size="12" fill="#333" textLength="40" lengthAdjust="spacing">74,039</text>
<text x="1547" y="640.9" font-size="12.3" fill="#2a2a2a" text-anchor="middle" textLength="49.7" lengthAdjust="spacing" stroke="#2a2a2a" stroke-width="0.12">Segment</text>
<text x="1307.5" y="660.9" font-size="12.3" fill="#2a2a2a" text-anchor="middle" textLength="56" lengthAdjust="spacing" stroke="#2a2a2a" stroke-width="0.12">Consumer</text>
<text x="1547" y="660.9" font-size="12.3" fill="#2a2a2a" text-anchor="middle" textLength="56.6" lengthAdjust="spacing" stroke="#2a2a2a" stroke-width="0.12">Corporate</text>
<text x="1786.5" y="660.9" font-size="12.3" fill="#2a2a2a" text-anchor="middle" textLength="68.2" lengthAdjust="spacing" stroke="#2a2a2a" stroke-width="0.12">Home Office</text>
<line x1="1188" y1="666.5" x2="1907" y2="666.5" stroke="#d4d4d4" stroke-width="1" />
<line x1="1188" y1="826.5" x2="1907" y2="826.5" stroke="#d4d4d4" stroke-width="1" />
<circle cx="1307.7" cy="746" r="40" fill="#a3a3a3"/>
<path d="M1307.7,746 L1307.7,706 A40,40 0 1 1 1305.75,785.95 Z" fill="#4e79a7"/>
<circle cx="1547" cy="746" r="40" fill="#a3a3a3"/>
<path d="M1547,746 L1547,706 A40,40 0 0 1 1565.90,781.25 Z" fill="#4e79a7"/>
<circle cx="1786.4" cy="746" r="40" fill="#a3a3a3"/>
<path d="M1786.4,746 L1786.4,706 A40,40 0 1 1 1782.43,785.80 Z" fill="#4e79a7"/>
<rect x="1704" y="982" width="110" height="29" fill="#ffffff" />
<text x="24.4" y="1000.6" font-size="12.5" fill="#555" textLength="67.6" lengthAdjust="spacing">Data Source</text>
<g fill="none" stroke="#666" stroke-width="1"><path d="M10.5,991.5 V1000.5 a4,1.6 0 0 0 8,0 V991.5 a4,1.6 0 0 0 -8,0 a4,1.6 0 0 0 8,0"/></g>
<line x1="130.5" y1="982" x2="130.5" y2="1011" stroke="#d0d0d0" stroke-width="1" />
<rect x="131.0" y="1007" width="91.0" height="4" fill="#ef5b6f" />
<text x="133.5" y="1000.6" font-size="12.5" fill="#555" textLength="76.5" lengthAdjust="spacing">based on map</text>
<line x1="222.5" y1="982" x2="222.5" y2="1011" stroke="#d0d0d0" stroke-width="1" />
<rect x="223.0" y="1007" width="100.0" height="4" fill="#ef5b6f" />
<text x="246" y="1000.6" font-size="12.5" fill="#555" textLength="68" lengthAdjust="spacing">Dashboard 1</text>
<line x1="323.5" y1="982" x2="323.5" y2="1011" stroke="#d0d0d0" stroke-width="1" />
<rect x="324.0" y="1007" width="100.0" height="4" fill="#6e5d8e" />
<text x="330" y="1000.6" font-size="12.5" fill="#555" textLength="82" lengthAdjust="spacing">subset &gt;15000</text>
<line x1="424.5" y1="982" x2="424.5" y2="1011" stroke="#d0d0d0" stroke-width="1" />
<rect x="425.0" y="1007" width="149.0" height="4" fill="#6e5d8e" />
<text x="429" y="1000.6" font-size="12.5" fill="#555" textLength="132" lengthAdjust="spacing">region parameter driven</text>
<line x1="574.5" y1="982" x2="574.5" y2="1011" stroke="#d0d0d0" stroke-width="1" />
<rect x="575.0" y="1007" width="192.0" height="4" fill="#6e5d8e" />
<text x="580" y="1000.6" font-size="12.5" fill="#555" textLength="173" lengthAdjust="spacing">region parm driven and &gt;15000</text>
<line x1="767.5" y1="982" x2="767.5" y2="1011" stroke="#d0d0d0" stroke-width="1" />
<rect x="768.0" y="1007" width="199.0" height="4" fill="#6e5d8e" />
<text x="773" y="1000.6" font-size="12.5" fill="#555" textLength="185" lengthAdjust="spacing">region parm driven and &gt;15000 ...</text>
<line x1="967.5" y1="982" x2="967.5" y2="1011" stroke="#d0d0d0" stroke-width="1" />
<rect x="968.0" y="1007" width="199.0" height="4" fill="#6e5d8e" />
<text x="973" y="1000.6" font-size="12.5" fill="#555" textLength="185" lengthAdjust="spacing">region parm driven and &gt;15000 ...</text>
<line x1="1167.5" y1="982" x2="1167.5" y2="1011" stroke="#d0d0d0" stroke-width="1" />
<rect x="1168.0" y="1007" width="118.0" height="4" fill="#6e5d8e" />
<text x="1173" y="1000.6" font-size="12.5" fill="#555" textLength="102" lengthAdjust="spacing">subset &gt;15000 (2)</text>
<line x1="1286.5" y1="982" x2="1286.5" y2="1011" stroke="#d0d0d0" stroke-width="1" />
<rect x="1287.0" y="1007" width="172.0" height="4" fill="#e5c67b" />
<text x="1292" y="1000.6" font-size="12.5" fill="#555" textLength="151" lengthAdjust="spacing">Set action slect by category</text>
<line x1="1459.5" y1="982" x2="1459.5" y2="1011" stroke="#d0d0d0" stroke-width="1" />
<rect x="1460.0" y="1007" width="120.0" height="4" fill="#e5c67b" />
<text x="1465" y="1000.6" font-size="12.5" fill="#555" textLength="102" lengthAdjust="spacing">Seat action Region</text>
<line x1="1580.5" y1="982" x2="1580.5" y2="1011" stroke="#d0d0d0" stroke-width="1" />
<rect x="1581.0" y="1007" width="123.0" height="4" fill="#e5c67b" />
<text x="1586" y="1000.6" font-size="12.5" fill="#555" textLength="106" lengthAdjust="spacing">Set action segment</text>
<g fill="none" stroke="#666" stroke-width="1"><rect x="230.5" y="990.5" width="12" height="11"/><line x1="236.5" y1="990.5" x2="236.5" y2="1001.5"/><line x1="230.5" y1="996" x2="242.5" y2="996"/></g>
<g fill="none" stroke="#555" stroke-width="1"><rect x="1712.5" y="990.5" width="11" height="11"/><line x1="1718" y1="990.5" x2="1718" y2="1001.5"/><line x1="1712.5" y1="996" x2="1723.5" y2="996"/></g>
<text x="1728" y="1000.3" font-size="13" fill="#333" font-weight="bold" textLength="78" lengthAdjust="spacing">Set action DB</text>
<line x1="1814.5" y1="982" x2="1814.5" y2="1011" stroke="#d0d0d0" stroke-width="1" />
<line x1="1822.5" y1="992" x2="1822.5" y2="1003" stroke="#555" stroke-width="1" />
<line x1="1823.5" y1="982" x2="1823.5" y2="1011" stroke="#d0d0d0" stroke-width="1" />
<line x1="1854.5" y1="982" x2="1854.5" y2="1011" stroke="#d0d0d0" stroke-width="1" />
<line x1="1887.5" y1="982" x2="1887.5" y2="1011" stroke="#d0d0d0" stroke-width="1" />
<g fill="none" stroke="#555" stroke-width="1"><rect x="1833.5" y="989.5" width="11" height="11"/><path d="M1836.5,998 V994 M1839,998 V992 M1841.5,998 V995"/><rect x="1865.5" y="989.5" width="11" height="11"/><path d="M1871,989.5 V1000.5 M1865.5,995 H1876.5"/><path d="M1897.5,990 V1000.5 L1901,999 L1904,1000.5 L1907.5,999 V990 L1904,991.5 L1901,990 Z"/></g>
<path d="M1839.5,1001 H1846.5 M1843,997.5 V1004.5" fill="none" stroke="#333" stroke-width="1.5" />
<path d="M1871.5,1001 H1878.5 M1875,997.5 V1004.5" fill="none" stroke="#333" stroke-width="1.5" />
<path d="M1903.5,1001 H1910.5 M1907,997.5 V1004.5" fill="none" stroke="#333" stroke-width="1.5" />
<text x="3" y="1025.6" font-size="12" fill="#333" textLength="80" lengthAdjust="spacing">34 of 102 marks</text>
<text x="101" y="1025.6" font-size="12" fill="#333" textLength="106.7" lengthAdjust="spacing">17 rows by 5 columns</text>
<text x="225.6" y="1025.6" font-size="12" fill="#333" textLength="117" lengthAdjust="spacing">SUM(Sales): 1,070,503</text>
<line x1="1553.5" y1="1013" x2="1553.5" y2="1031" stroke="#d4d4d4" stroke-width="1" />
<line x1="1680.5" y1="1013" x2="1680.5" y2="1031" stroke="#d4d4d4" stroke-width="1" />
<line x1="1707.5" y1="1013" x2="1707.5" y2="1031" stroke="#d4d4d4" stroke-width="1" />
<line x1="1734.5" y1="1013" x2="1734.5" y2="1031" stroke="#d4d4d4" stroke-width="1" />
<line x1="1782.5" y1="1013" x2="1782.5" y2="1031" stroke="#d4d4d4" stroke-width="1" />
<line x1="1852.5" y1="1013" x2="1852.5" y2="1031" stroke="#d4d4d4" stroke-width="1" />
<g fill="#555"><rect x="1789" y="1017.5" width="1.2" height="8"/><polygon points="1797,1017.5 1797,1025.5 1791.5,1021.5"/><polygon points="1811,1017.5 1811,1025.5 1805.5,1021.5"/><polygon points="1823,1017.5 1823,1025.5 1828.5,1021.5"/><polygon points="1837,1017.5 1837,1025.5 1842.5,1021.5"/><rect x="1843" y="1017.5" width="1.2" height="8"/></g>
<g fill="#bdbdbd">
<rect x="1861" y="1016.5" width="3" height="3"/>
<rect x="1861" y="1020.5" width="3" height="3"/>
<rect x="1861" y="1024.5" width="3" height="3"/>
<rect x="1865" y="1016.5" width="3" height="3"/>
<rect x="1865" y="1020.5" width="3" height="3"/>
<rect x="1865" y="1024.5" width="3" height="3"/>
<rect x="1869" y="1016.5" width="3" height="3"/>
<rect x="1869" y="1020.5" width="3" height="3"/>
<rect x="1869" y="1024.5" width="3" height="3"/>
</g>
<rect x="1882" y="1016.5" width="11" height="11" fill="#c4c4c4" />
<rect x="1903" y="1016" width="11" height="11" fill="#555" />
<defs><radialGradient id="sun" cx="0.35" cy="0.35" r="0.7"><stop offset="0" stop-color="#ffd45a"/><stop offset="1" stop-color="#f59e1b"/></radialGradient><linearGradient id="win" x1="0" y1="0" x2="1" y2="1"><stop offset="0" stop-color="#3ccaf7"/><stop offset="1" stop-color="#0a72d2"/></linearGradient><linearGradient id="teams" x1="0" y1="0" x2="0" y2="1"><stop offset="0" stop-color="#7f8cf0"/><stop offset="1" stop-color="#5559c4"/></linearGradient><linearGradient id="tv" x1="0" y1="0" x2="1" y2="1"><stop offset="0" stop-color="#ffffff"/><stop offset="1" stop-color="#d8d8d8"/></linearGradient><linearGradient id="edge" x1="0" y1="0" x2="1" y2="1"><stop offset="0" stop-color="#36c0e8"/><stop offset="0.6" stop-color="#1e7ad4"/><stop offset="1" stop-color="#1654b0"/></linearGradient></defs>
<circle cx="32" cy="1056" r="9" fill="url(#sun)"/>
<text x="51.5" y="1052.7" font-size="11.5" fill="#222" textLength="24" lengthAdjust="spacing">57°F</text>
<text x="51.5" y="1068.7" font-size="11.5" fill="#444" textLength="34" lengthAdjust="spacing">Sunny</text>
<rect x="707.2" y="1045" width="10.8" height="10.8" fill="url(#win)" rx="0.6"/>
<rect x="719.2" y="1045" width="10.8" height="10.8" fill="url(#win)" rx="0.6"/>
<rect x="707.2" y="1057" width="10.8" height="10.8" fill="url(#win)" rx="0.6"/>
<rect x="719.2" y="1057" width="10.8" height="10.8" fill="url(#win)" rx="0.6"/>
<circle cx="764.4" cy="1054" r="7.6" fill="none" stroke="#1c1c1c" stroke-width="1.9"/>
<line x1="759" y1="1059.5" x2="753.6" y2="1065.2" stroke="#1c1c1c" stroke-width="2.6" stroke-linecap="round"/>
<rect x="801.3" y="1045" width="17.5" height="15.2" fill="url(#tv)" rx="1"/>
<rect x="795" y="1051.3" width="18" height="15.5" fill="#262626" rx="1"/>
<rect x="801.3" y="1051.3" width="11.7" height="8.9" fill="#a9a9a9" />
<circle cx="850.3" cy="1056" r="11.3" fill="url(#teams)"/>
<polygon points="841.0,1061.0 839.0,1067.5 846.0,1065.0" fill="#5a5ec6" stroke="none" stroke-width="1" />
<rect x="844.5" y="1051.8" width="9" height="8.4" fill="#fff" rx="1.6"/>
<polygon points="853.0,1054.5 857.0,1052.0 857.0,1060.0 853.0,1057.5" fill="#fff" stroke="none" stroke-width="1" />
<circle cx="894.4" cy="1056" r="11" fill="#fbfbfb" stroke="#e0e0e0" stroke-width="0.6"/>
<rect x="887" y="1052.5" width="7" height="2.6" fill="#36c5f0" rx="1.3"/>
<rect x="892.2" y="1047.5" width="2.6" height="7" fill="#36c5f0" rx="1.3"/>
<rect x="888.8" y="1057.5" width="2.6" height="7" fill="#e01e5a" rx="1.3"/>
<rect x="887" y="1057.5" width="7" height="2.6" fill="#e01e5a" rx="1.3"/>
<rect x="897" y="1047.5" width="2.6" height="7" fill="#2eb67d" rx="1.3"/>
<rect x="897" y="1052.5" width="7" height="2.6" fill="#2eb67d" rx="1.3"/>
<rect x="895" y="1057.5" width="7" height="2.6" fill="#ecb22e" rx="1.3"/>
<rect x="897" y="1057.5" width="2.6" height="7" fill="#ecb22e" rx="1.3"/>
<circle cx="904.1" cy="1047.1" r="6.9" fill="#c8264a" stroke="#6a1a22" stroke-width="0.8"/>
<text x="904.1" y="1051.2" font-size="9.5" fill="#fff" font-weight="bold" text-anchor="middle">1</text>
<rect x="891.7" y="1072.7" width="5.6" height="2.6" fill="#7a776a" rx="1.3"/>
<circle cx="938.6" cy="1056" r="11.7" fill="url(#edge)"/>
<path d="M927,1053 a11.7,11.7 0 0 1 23,-2 a6,6 0 0 1 -4,8 a5,5 0 0 0 -6,-6 a8,8 0 0 0 -13,0 Z" fill="#52c66b"/>
<path d="M940,1052 a6,6 0 0 1 6,5 h-6 Z" fill="#f0ead0"/>
<circle cx="932.4" cy="1063" r="5.2" fill="#a8a8a8" stroke="#eee" stroke-width="0.8"/>
<circle cx="932.4" cy="1061.5" r="1.8" fill="#eee"/>
<rect x="971" y="1045.2" width="9.5" height="4" fill="#e0a419" rx="1"/>
<rect x="971" y="1048" width="24.2" height="18.4" fill="#f8c94a" rx="1.2"/>
<rect x="975.2" y="1059.5" width="15.2" height="7" fill="#1f6fd0" rx="1.5"/>
<rect x="977.5" y="1061.5" width="10.5" height="1.2" fill="#5ea3ef" />
<rect x="1015.2" y="1044.4" width="17.3" height="16.6" fill="#f3f3f3" rx="1.8"/>
<rect x="1017.8" y="1046.8" width="10" height="9.5" fill="none" stroke="#d32f2f" stroke-width="2" stroke-dasharray="1.8,1.2"/>
<path d="M1021,1055.5 L1035,1058 M1027,1050 L1029,1064" fill="none" stroke="#7d7d7d" stroke-width="1.6" />
<circle cx="1036.6" cy="1057.5" r="2.4" fill="#fff" stroke="#1a8ae0" stroke-width="1.6"/><circle cx="1028.3" cy="1065.5" r="2.4" fill="#fff" stroke="#1a8ae0" stroke-width="1.6"/>
<path d="M1071,1056 L1080.70,1050.40 A11.2,11.2 0 0 0 1061.30,1050.40 Z" fill="#db4437" transform="rotate(0)"/>
<path d="M1071,1056 L1071.00,1067.20 A11.2,11.2 0 0 0 1080.70,1050.40 Z" fill="#f4c20d" transform="rotate(0)"/>
<path d="M1071,1056 L1061.30,1050.40 A11.2,11.2 0 0 0 1071.00,1067.20 Z" fill="#0f9d58" transform="rotate(0)"/>
<circle cx="1071" cy="1056" r="5.3" fill="#fff"/><circle cx="1071" cy="1056" r="4.2" fill="#4a88ea"/>
<rect x="1067.5" y="1072.7" width="6" height="2.6" fill="#7a776a" rx="1.3"/>
<rect x="1103.5" y="1044.4" width="22.8" height="22.7" fill="#3a8af5" rx="7"/>
<rect x="1108" y="1051.5" width="10" height="9" fill="#fff" rx="2"/>
<polygon points="1118.5,1054.0 1122.3,1051.3 1122.3,1060.2 1118.5,1057.5" fill="#fff" stroke="none" stroke-width="1" />
<rect x="1140" y="1036.8" width="38" height="38.6" fill="#f6f0da" rx="4"/>
<rect x="1148.7" y="1046" width="22" height="21.4" fill="#d9d9d9" />
<rect x="1147.7" y="1045" width="22" height="21.4" fill="#f7f9fb" />
<g stroke="#3f78b5" stroke-width="1.1">
<line x1="1153.2" y1="1055.7" x2="1164.2" y2="1055.7"/><line x1="1158.7" y1="1050.2" x2="1158.7" y2="1061.2"/>
<line x1="1157.1000000000001" y1="1047.5" x2="1160.3" y2="1047.5"/><line x1="1158.7" y1="1045.9" x2="1158.7" y2="1049.1"/>
<line x1="1157.1000000000001" y1="1064" x2="1160.3" y2="1064"/><line x1="1158.7" y1="1062.4" x2="1158.7" y2="1065.6"/>
<line x1="1148.9" y1="1055.7" x2="1152.1" y2="1055.7"/><line x1="1150.5" y1="1054.1000000000001" x2="1150.5" y2="1057.3"/>
<line x1="1165.4" y1="1055.7" x2="1168.6" y2="1055.7"/><line x1="1167" y1="1054.1000000000001" x2="1167" y2="1057.3"/>
<line x1="1151.5" y1="1050" x2="1154.5" y2="1050"/><line x1="1153" y1="1048.5" x2="1153" y2="1051.5"/>
<line x1="1162.9" y1="1050" x2="1165.9" y2="1050"/><line x1="1164.4" y1="1048.5" x2="1164.4" y2="1051.5"/>
<line x1="1151.5" y1="1061.4" x2="1154.5" y2="1061.4"/><line x1="1153" y1="1059.9" x2="1153" y2="1062.9"/>
<line x1="1162.9" y1="1061.4" x2="1165.9" y2="1061.4"/><line x1="1164.4" y1="1059.9" x2="1164.4" y2="1062.9"/>
</g>
<rect x="1151" y="1072.3" width="15.5" height="3" fill="#3c5478" rx="1.5"/>
<line x1="1192" y1="1046.5" x2="1201" y2="1067" stroke="#d9452f" stroke-width="2.4" />
<line x1="1197.5" y1="1046.5" x2="1205.7" y2="1063" stroke="#e88a3a" stroke-width="2.4" />
<line x1="1203" y1="1046.5" x2="1209" y2="1059" stroke="#8ea08a" stroke-width="2.4" />
<line x1="1208.4" y1="1046.5" x2="1213.8" y2="1054.7" stroke="#4d86c8" stroke-width="2.4" />
<rect x="1199" y="1072.7" width="6" height="2.6" fill="#7a776a" rx="1.3"/>
<path d="M1709.3,1058.9 L1715,1052.8 L1720.8,1058.9" fill="none" stroke="#222" stroke-width="1.2" />
<defs><linearGradient id="cloud" x1="0" y1="0" x2="0" y2="1"><stop offset="0" stop-color="#9a9a9a"/><stop offset="1" stop-color="#e6e6e6"/></linearGradient></defs>
<path d="M1741.5,1060.6 a3,3 0 0 1 -0.5,-6 a5,5 0 0 1 9,-2.2 a3.6,3.6 0 0 1 3.8,8.2 Z" fill="url(#cloud)" stroke="#222" stroke-width="1.1"/>
<g fill="none" stroke="#222" stroke-width="1.2"><path d="M1771.8,1053.5 a10.5,10.5 0 0 1 14.8,0"/><path d="M1774.2,1056.2 a7,7 0 0 1 10,0"/><path d="M1776.6,1058.8 a3.5,3.5 0 0 1 5.2,0"/></g>
<circle cx="1779.2" cy="1060.8" r="1.1" fill="#222"/>
<path d="M1795.5,1053.8 H1798.2 L1801.8,1050.6 V1061 L1798.2,1057.8 H1795.5 Z" fill="none" stroke="#222" stroke-width="1.1" />
<path d="M1804.2,1053 a4.5,4.5 0 0 1 0,6 M1807,1051.3 a7,7 0 0 1 0,9.5" fill="none" stroke="#b0ad9a" stroke-width="0.9" />
<rect x="1824.5" y="1052.3" width="10.2" height="7.6" fill="none" stroke="#222" stroke-width="1.2" rx="1"/>
<rect x="1826.2" y="1054" width="7" height="4.2" fill="#222" />
<rect x="1834.7" y="1054.3" width="1.4" height="3.4" fill="#222" />
<path d="M1821.2,1049.8 V1052.5 M1823.8,1049.8 V1052.5 M1820.3,1052.8 H1824.7 M1822.5,1053 V1060.6" fill="none" stroke="#222" stroke-width="1.1" />
<text x="1900.1" y="1051.8" font-size="11.8" fill="#222" text-anchor="end" textLength="46.4" lengthAdjust="spacing">10:12 AM</text>
<text x="1900.1" y="1067.8" font-size="11.8" fill="#222" text-anchor="end" textLength="48.5" lengthAdjust="spacing">4/4/2022</text>
</svg>
</body></html>
